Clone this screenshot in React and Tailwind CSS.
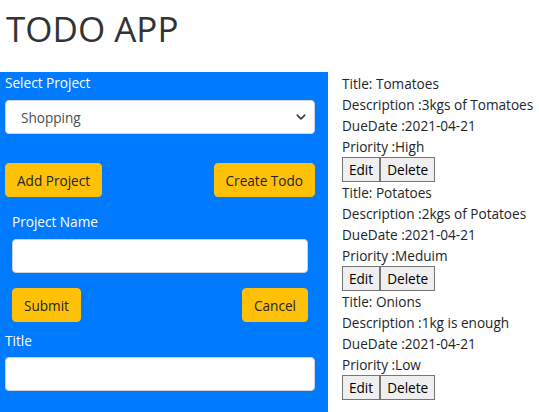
import React from 'react';

const todos = [
  { title: 'Tomatoes', description: '3kgs of Tomatoes', dueDate: '2021-04-21', priority: 'High' },
  { title: 'Potatoes', description: '2kgs of Potatoes', dueDate: '2021-04-21', priority: 'Meduim' },
  { title: 'Onions', description: '1kg is enough', dueDate: '2021-04-21', priority: 'Low' },
];

const YellowButton = ({ children }) => (
  <button className="h-[34px] rounded-[4px] border border-[#ffc107] bg-[#ffc107] px-[11px] text-[#212529]">
    {children}
  </button>
);

const TextInput = () => (
  <div className="h-[34px] rounded-[4px] border border-[#ced4da] bg-white" />
);

const App = () => {
  return (
    <div className="min-h-screen bg-white font-['Open_Sans',sans-serif] text-[13.6px] leading-[21px] text-[#212529]">
      <h1 className="mt-[5px] mb-[19px] pl-[6px] text-[35px] leading-[48px] font-medium text-[#333]">TODO APP</h1>

      <div className="flex gap-[14px]">
        {/* left form panel */}
        <div className="w-[328px] shrink-0 bg-[#007bff] px-[5px] pb-[40px] text-white">
          <label className="block mb-[7px]">Select Project</label>
          <div className="flex h-[34px] w-[310px] items-center justify-between rounded-[4px] border border-[#ced4da] bg-white pl-[15px] pr-[8px] text-[#495057]">
            <span>Shopping</span>
            <svg width="10" height="10" viewBox="0 0 16 16">
              <path d="M2 5l6 6 6-6" fill="none" stroke="#343a40" strokeWidth="2.5" strokeLinecap="round" strokeLinejoin="round" />
            </svg>
          </div>

          <div className="mt-[29px] flex w-[310px] justify-between">
            <YellowButton>Add Project</YellowButton>
            <YellowButton>Create Todo</YellowButton>
          </div>

          <div className="w-[310px] px-[7px] pt-[14px]">
            <label className="block mb-[7px]">Project Name</label>
            <TextInput />
            <div className="mt-[15px] flex justify-between">
              <YellowButton>Submit</YellowButton>
              <YellowButton>Cancel</YellowButton>
            </div>
          </div>

          <div className="w-[310px] pt-[8px]">
            <label className="block mb-[6px]">Title</label>
            <TextInput />
          </div>
        </div>

        {/* todo list */}
        <div className="pt-[1px]">
          {todos.map((t) => (
            <div key={t.title}>
              <p>Title: {t.title}</p>
              <p>Description :{t.description}</p>
              <p>DueDate :{t.dueDate}</p>
              <p>Priority :{t.priority}</p>
              <div className="flex">
                <button className="h-[25px] border border-[#767676] bg-[#efefef] px-[6px] text-black">Edit</button>
                <button className="h-[25px] border border-[#767676] bg-[#efefef] px-[6px] text-black">Delete</button>
              </div>
            </div>
          ))}
        </div>
      </div>
    </div>
  );
};

export default App;
